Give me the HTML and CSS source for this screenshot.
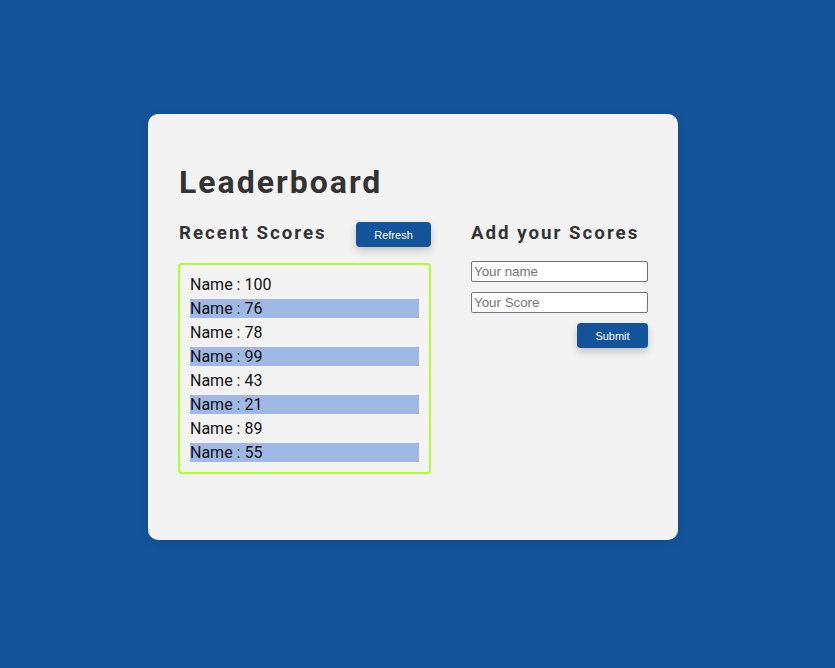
FILE: index.html
```html
<!DOCTYPE html>
<html>
<head>
<meta charset="utf-8">
<link rel="stylesheet" href="styles.css">
</head>
<body>
<main class="card">
  <h1 class="title">Leaderboard</h1>
  <div class="columns">
    <section class="recent">
      <div class="recent-head">
        <h2 class="heading">Recent Scores</h2>
        <button class="btn btn-refresh">Refresh</button>
      </div>
      <ul class="scores">
        <li>Name : 100</li>
        <li>Name : 76</li>
        <li>Name : 78</li>
        <li>Name : 99</li>
        <li>Name : 43</li>
        <li>Name : 21</li>
        <li>Name : 89</li>
        <li>Name : 55</li>
      </ul>
    </section>
    <section class="add">
      <h2 class="heading">Add your Scores</h2>
      <form class="form">
        <input class="field" type="text" placeholder="Your name">
        <input class="field" type="text" placeholder="Your Score">
        <button class="btn btn-submit" type="button">Submit</button>
      </form>
    </section>
  </div>
</main>
</body>
</html>
```
FILE: styles.css
```css
html, body {
  margin: 0;
  padding: 0;
}
body {
  background: #13539a;
  height: 668px;
  padding: 114px 0 0 148px;
  box-sizing: border-box;
  font-family: Roboto, "Liberation Sans", sans-serif;
}
.card {
  width: 530px;
  height: 426px;
  box-sizing: border-box;
  background: #f3f3f3;
  border-radius: 10px;
  padding: 50px 30px 0 31px;
  box-shadow: 0 2px 8px rgba(0,0,0,0.12);
}
.title {
  margin: 0 0 21px;
  font-size: 32px;
  line-height: 37px;
  font-weight: 700;
  letter-spacing: 2px;
  color: #333;
}
.columns {
  display: flex;
  gap: 40px;
}
.recent {
  width: 252px;
}
.recent-head {
  display: flex;
  justify-content: space-between;
  align-items: flex-start;
  margin-bottom: 16px;
}
.heading {
  margin: 0;
  font-size: 18.72px;
  line-height: 22px;
  font-weight: 700;
  letter-spacing: 2px;
  color: #333;
}
.btn {
  background: #13539a;
  color: #fff;
  border: none;
  border-radius: 4px;
  font-family: "Liberation Sans", Arial, sans-serif;
  font-size: 11px;
  height: 25px;
  padding: 0;
  box-shadow: 0 4px 8px rgba(0,0,0,0.2);
}
.btn-refresh {
  width: 75px;
}
.scores {
  list-style: none;
  margin: 0 0 0 -1px;
  padding: 10px;
  border: 2px solid #adff2f;
  border-radius: 4px;
  display: flex;
  flex-direction: column;
  gap: 5px;
}
.scores li {
  font-size: 16px;
  line-height: 19px;
  height: 19px;
  color: #111;
}
.scores li:nth-child(even) {
  background: #9fb8e6;
}
.add {
  width: 177px;
}
.add .heading {
  margin-bottom: 17px;
}
.form {
  display: flex;
  flex-direction: column;
  gap: 10px;
}
.field {
  width: 177px;
  height: 21px;
  box-sizing: border-box;
  margin: 0;
  border: 1px solid #767676;
  border-radius: 2px;
  padding: 1px 2px;
  font-family: "Liberation Sans", Arial, sans-serif;
  font-size: 13.333px;
  background: #fff;
}
.field::placeholder {
  color: #757575;
}
.btn-submit {
  width: 71px;
  align-self: flex-end;
}
```
